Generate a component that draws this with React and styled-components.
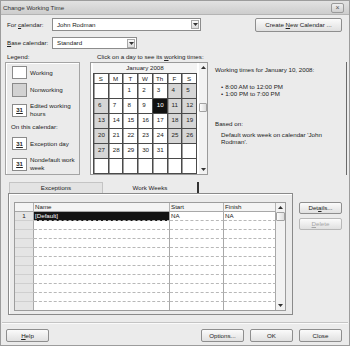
import React from 'react'
import styled, { createGlobalStyle } from 'styled-components'

const GlobalStyle = createGlobalStyle`
  html, body { margin: 0; padding: 0; background: #ebebeb; }
  body {
    font-family: "Liberation Sans", Arial, sans-serif;
    font-size: 6.2px;
    line-height: 8px;
    color: #222;
  }
  #root { width: 350px; height: 346px; overflow: hidden; }
`

const Window = styled.div`
  width: 350px;
  height: 346px;
  box-sizing: border-box;
  border: 1px solid #9c9c9c;
  background: #ebebeb;
  display: flex;
  flex-direction: column;
`

const TitleBar = styled.div`
  height: 13px;
  flex: none;
  display: flex;
  align-items: center;
  justify-content: space-between;
  padding: 0 5px 0 2px;
  background: linear-gradient(#e2e2e2, #cdcdcd);
  border-bottom: 1px solid #b4b4b4;
  color: #333;
`

const CloseBox = styled.div`
  width: 13px;
  height: 10px;
  box-sizing: border-box;
  border: 1px solid #9a9a9a;
  border-radius: 2px;
  background: linear-gradient(#efefef, #cfcfcf);
  display: flex;
  align-items: center;
  justify-content: center;
  font-size: 7px;
  color: #555;
`

const Body = styled.div`
  flex: 1;
  display: flex;
  flex-direction: column;
  padding: 3px 7px 0 4px;
`

const Row = styled.div`
  display: flex;
  align-items: ${p => p.$align || 'center'};
  height: ${p => p.$h}px;
  margin-top: ${p => p.$mt || 0}px;
  flex: none;
`

const Label = styled.span`
  width: ${p => p.$w}px;
  margin-left: ${p => p.$ml || 0}px;
  line-height: ${p => p.$lh || 8}px;
  flex: none;
  white-space: nowrap;
`

const Combo = styled.div`
  width: ${p => p.$w}px;
  height: ${p => p.$h}px;
  box-sizing: border-box;
  border: 1px solid #8c8c8c;
  background: #fff;
  display: flex;
  align-items: center;
  justify-content: space-between;
  padding: 0 1px 0 4px;
  flex: none;
`

const ComboArrow = styled.div`
  width: 8px;
  height: 9px;
  box-sizing: border-box;
  border: 1px solid #a8a8a8;
  background: linear-gradient(#fafafa, #dcdcdc);
  display: flex;
  align-items: center;
  justify-content: center;
`

const Button = styled.div`
  width: ${p => p.$w || 43}px;
  height: ${p => p.$h || 13}px;
  box-sizing: border-box;
  margin-left: ${p => (p.$auto ? 'auto' : `${p.$ml || 0}px`)};
  border: 1px solid ${p => (p.$disabled ? '#b8b8b8' : '#8e8e8e')};
  border-radius: 2px;
  background: linear-gradient(#fbfbfb, #e0e0e0);
  display: flex;
  align-items: center;
  justify-content: center;
  color: ${p => (p.$disabled ? '#a6a6a6' : '#222')};
  flex: none;
  white-space: nowrap;
`

const Main = styled.div`
  display: flex;
  height: 113px;
  margin-top: 1px;
  margin-right: -5px;
  flex: none;
`

const LegendBox = styled.div`
  width: 75px;
  box-sizing: border-box;
  border: 1px solid #a4a4a4;
  box-shadow: inset 1px 1px 0 #fff;
  padding: 0 0 0 6px;
  display: flex;
  flex-direction: column;
`

const LegendItem = styled.div`
  display: flex;
  align-items: center;
  margin-top: ${p => p.$mt}px;
`

const Swatch = styled.div`
  width: 15px;
  height: ${p => p.$h || 13}px;
  box-sizing: border-box;
  border: 1px solid #8a8a8a;
  background: ${p => (p.$gray ? '#d2d2d2' : '#fff')};
  margin-right: 3px;
  flex: none;
  display: flex;
  align-items: center;
  justify-content: center;
  font-weight: bold;
  text-decoration: underline;
  font-size: 6px;
`

const SubHead = styled.div`
  margin-top: ${p => p.$mt}px;
  margin-left: -1px;
`

const CalFrame = styled.div`
  width: 118px;
  margin-left: 10px;
  box-sizing: border-box;
  border: 1px solid #9a9a9a;
  background: #fff;
  display: flex;
  padding-left: 2px;
`

const CalBody = styled.div`
  width: 104px;
  display: flex;
  flex-direction: column;
`

const MonthHead = styled.div`
  height: 10px;
  display: flex;
  align-items: center;
  justify-content: center;
  background: #f3f3f3;
`

const DayGrid = styled.div`
  display: grid;
  grid-template-columns: repeat(7, 1fr);
  grid-template-rows: 10px repeat(6, 15px);
  border-right: 1px solid #4a4a4a;
  border-bottom: 1px solid #4a4a4a;
`

const DayName = styled.div`
  border-left: 1px solid #4a4a4a;
  border-top: 1px solid #4a4a4a;
  box-shadow: inset 1px 0 0 #a0a0a0;
  display: flex;
  align-items: center;
  justify-content: center;
  background: #fff;
`

const DayCell = styled.div`
  border-left: 1px solid #4a4a4a;
  border-top: 1px solid #4a4a4a;
  box-shadow: inset 1px 0 0 ${p => (p.$sel ? '#111' : '#a0a0a0')};
  padding: 2px 0 0 4px;
  background: ${p => (p.$sel ? '#111' : p.$off ? '#d6d6d6' : '#fff')};
  color: ${p => (p.$sel ? '#fff' : '#222')};
`

const VScroll = styled.div`
  width: ${p => p.$w}px;
  margin-left: ${p => p.$ml || 0}px;
  background: #f2f2f2;
  display: flex;
  flex-direction: column;
  align-items: center;
  flex: none;
`

const ScrollArrow = styled.div`
  height: 9px;
  width: 100%;
  display: flex;
  align-items: center;
  justify-content: center;
`

const Thumb = styled.div`
  width: 100%;
  box-sizing: border-box;
  height: ${p => p.$h}px;
  margin-top: ${p => p.$mt}px;
  border: 1px solid #a2a2a2;
  border-radius: 1px;
  background: linear-gradient(90deg, #fdfdfd, #dedede);
`

const Info = styled.div`
  flex: 1;
  margin-left: 7px;
  padding-top: 4px;
  border-right: 1px solid #6a6a6a;
  display: flex;
  flex-direction: column;
`

const Bullets = styled.ul`
  margin: ${p => p.$mt}px 0 0 0;
  padding: 0 0 0 6px;
  list-style: none;
  line-height: 7px;
  li::before { content: "•"; margin-right: 2px; }
`

const Para = styled.div`
  margin-top: ${p => p.$mt}px;
  padding-left: ${p => p.$pl || 0}px;
  line-height: 7px;
`

const TabRow = styled.div`
  display: flex;
  height: 11px;
  margin-top: 7px;
  margin-left: 4px;
  flex: none;
`

const Tab = styled.div`
  width: ${p => p.$w}px;
  box-sizing: border-box;
  display: flex;
  align-items: center;
  justify-content: center;
  background: ${p => (p.$active ? 'transparent' : '#e3e3e3')};
  border: ${p => (p.$active ? 'none' : '1px solid #c4c4c4')};
  border-bottom: none;
  border-right: ${p => (p.$active ? '2px solid #333' : '1px solid #c4c4c4')};
`

const Lower = styled.div`
  display: flex;
  margin-left: 3px;
  flex: none;
`

const Panel = styled.div`
  width: 285px;
  height: 122px;
  box-sizing: border-box;
  border: 1px solid #8a8a8a;
  box-shadow: inset 1px 1px 0 #fff;
  padding: 8px 6px 3px 5px;
`

const Grid = styled.div`
  height: 109px;
  box-sizing: border-box;
  border: 1px solid #9c9c9c;
  background: #fff;
  display: flex;
`

const Table = styled.div`
  flex: 1;
  display: grid;
  grid-template-columns: 19px 136px 54px 1fr;
  grid-auto-rows: 9px;
  overflow: hidden;
`

const HeadCell = styled.div`
  background: #f4f4f4;
  border-right: 1px solid #b4b4b4;
  border-bottom: 1px solid #a8a8a8;
  padding-left: 1px;
  line-height: 8px;
`

const NumCell = styled.div`
  background: #e4e4e4;
  border-right: 1px solid #a8a8a8;
  border-bottom: 1px solid #cfcfcf;
  text-align: center;
  line-height: 8px;
`

const Cell = styled.div`
  border-right: 1px solid #a8a8a8;
  border-bottom: 1px dashed #b8b8b8;
  padding-left: 1px;
  line-height: 8px;
  background: ${p => (p.$sel ? '#141414' : '#fff')};
  color: ${p => (p.$sel ? '#fff' : '#222')};
`

const SideButtons = styled.div`
  display: flex;
  flex-direction: column;
  gap: 4px;
  margin-left: 6px;
  padding-top: 9px;
`

const Separator = styled.div`
  margin: 7px -6px 0 -3px;
  border-top: 1px solid #c4c4c4;
  border-bottom: 1px solid #fafafa;
  flex: none;
`

const Footer = styled.div`
  display: flex;
  margin-top: 5px;
  margin-left: 1px;
  gap: 6px;
`

const Tri = ({ up }) => (
  <svg width="5" height="3" viewBox="0 0 5 3">
    <path d={up ? 'M0 3 L2.5 0 L5 3 Z' : 'M0 0 L5 0 L2.5 3 Z'} fill="#333" />
  </svg>
)

const weeks = [
  [null, null, 1, 2, 3, 4, 5],
  [6, 7, 8, 9, 10, 11, 12],
  [13, 14, 15, 16, 17, 18, 19],
  [20, 21, 22, 23, 24, 25, 26],
  [27, 28, 29, 30, 31, null, null],
  [null, null, null, null, null, null, null]
]
const dayNames = ['S', 'M', 'T', 'W', 'Th', 'F', 'S']

const Calendar = () => (
  <CalFrame>
    <CalBody>
      <MonthHead>January 2008</MonthHead>
      <DayGrid>
        {dayNames.map((d, i) => <DayName key={'n' + i}>{d}</DayName>)}
        {weeks.map((w, r) =>
          w.map((d, c) => (
            <DayCell
              key={r + '-' + c}
              $off={d !== null && (c === 0 || c >= 5)}
              $sel={d === 10}
            >
              {d}
            </DayCell>
          ))
        )}
      </DayGrid>
    </CalBody>
    <VScroll $w={8} $ml={2}>
      <ScrollArrow><Tri up /></ScrollArrow>
      <Thumb $h={9} $mt={31} />
      <div style={{ flex: 1 }} />
      <ScrollArrow><Tri /></ScrollArrow>
    </VScroll>
  </CalFrame>
)

const Legend = () => (
  <LegendBox>
    <LegendItem $mt={3}><Swatch />Working</LegendItem>
    <LegendItem $mt={4}><Swatch $gray $h={14} />Nonworking</LegendItem>
    <LegendItem $mt={5}>
      <Swatch>31</Swatch>
      <span>Edited working<br />hours</span>
    </LegendItem>
    <SubHead $mt={5}>On this calendar:</SubHead>
    <LegendItem $mt={6}><Swatch>31</Swatch>Exception day</LegendItem>
    <LegendItem $mt={6}>
      <Swatch>31</Swatch>
      <span>Nondefault work<br />week</span>
    </LegendItem>
  </LegendBox>
)

const rows = Array.from({ length: 11 })

const WeeksTable = () => (
  <Grid>
    <Table>
      <HeadCell />
      <HeadCell>Name</HeadCell>
      <HeadCell>Start</HeadCell>
      <HeadCell>Finish</HeadCell>
      {rows.map((_, i) => (
        <React.Fragment key={i}>
          <NumCell>{i === 0 ? '1' : ''}</NumCell>
          <Cell $sel={i === 0}>{i === 0 ? '[Default]' : ''}</Cell>
          <Cell>{i === 0 ? 'NA' : ''}</Cell>
          <Cell>{i === 0 ? 'NA' : ''}</Cell>
        </React.Fragment>
      ))}
    </Table>
    <VScroll $w={9}>
      <ScrollArrow><Tri up /></ScrollArrow>
      <Thumb $h={9} $mt={0} />
      <div style={{ flex: 1 }} />
      <ScrollArrow><Tri /></ScrollArrow>
    </VScroll>
  </Grid>
)

export default function App() {
  return (
    <>
      <GlobalStyle />
      <Window>
        <TitleBar>
          <span>Change Working Time</span>
          <CloseBox>×</CloseBox>
        </TitleBar>
        <Body>
          <Row $h={14} $align="flex-start">
            <Label $w={45} $ml={2} $lh={13}>For <u>c</u>alendar:</Label>
            <Combo $w={149} $h={13}>
              <span>John Rodman</span>
              <ComboArrow><Tri /></ComboArrow>
            </Combo>
            <Button $w={87} $h={14} $auto><span>Create <u>N</u>ew Calendar ...</span></Button>
          </Row>
          <Row $h={12} $mt={5}>
            <Label $w={45} $ml={2}><u>B</u>ase calendar:</Label>
            <Combo $w={85} $h={12}>
              <span>Standard</span>
              <ComboArrow><Tri /></ComboArrow>
            </Combo>
          </Row>
          <Row $h={9} $mt={3}>
            <Label $w={90} $ml={2}>Legend:</Label>
            <Label>Click on a day to see its <u>w</u>orking times:</Label>
          </Row>
          <Main>
            <Legend />
            <Calendar />
            <Info>
              <Para $mt={0}>Working times for January 10, 2008:</Para>
              <Bullets $mt={10}>
                <li>8:00 AM to 12:00 PM</li>
                <li>1:00 PM to 7:00 PM</li>
              </Bullets>
              <Para $mt={23}>Based on:</Para>
              <Para $mt={4} $pl={6}>Default work week on calendar 'John<br />Rodman'.</Para>
            </Info>
          </Main>
          <TabRow>
            <Tab $w={94}>Exceptions</Tab>
            <Tab $w={96} $active>Work Weeks</Tab>
          </TabRow>
          <Lower>
            <Panel>
              <WeeksTable />
            </Panel>
            <SideButtons>
              <Button $h={12}><span>Det<u>a</u>ils...</span></Button>
              <Button $h={12} $disabled><span><u>D</u>elete</span></Button>
            </SideButtons>
          </Lower>
          <Separator />
          <Footer>
            <Button><span><u>H</u>elp</span></Button>
            <Button $auto>Options...</Button>
            <Button>OK</Button>
            <Button>Close</Button>
          </Footer>
        </Body>
      </Window>
    </>
  )
}
